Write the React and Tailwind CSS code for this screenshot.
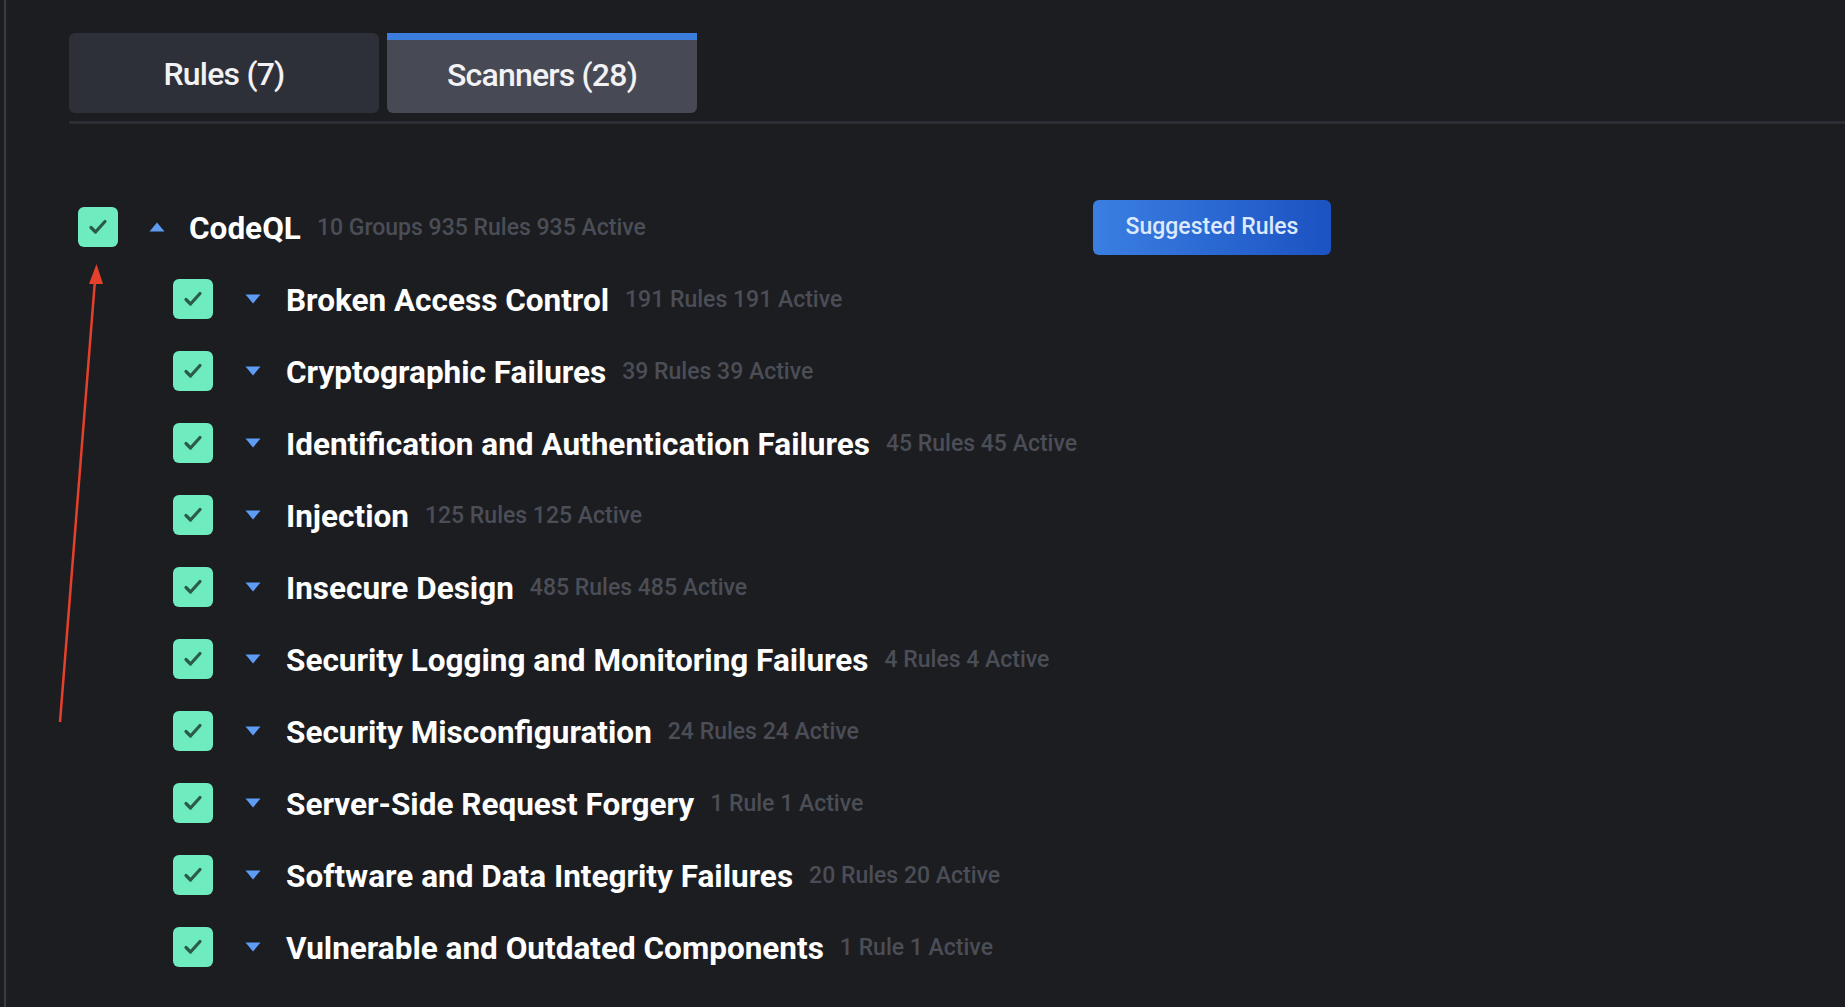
import { useState } from 'react';

const groups = [
  { name: 'Broken Access Control', meta: '191 Rules 191 Active' },
  { name: 'Cryptographic Failures', meta: '39 Rules 39 Active' },
  { name: 'Identification and Authentication Failures', meta: '45 Rules 45 Active' },
  { name: 'Injection', meta: '125 Rules 125 Active' },
  { name: 'Insecure Design', meta: '485 Rules 485 Active' },
  { name: 'Security Logging and Monitoring Failures', meta: '4 Rules 4 Active' },
  { name: 'Security Misconfiguration', meta: '24 Rules 24 Active' },
  { name: 'Server-Side Request Forgery', meta: '1 Rule 1 Active' },
  { name: 'Software and Data Integrity Failures', meta: '20 Rules 20 Active' },
  { name: 'Vulnerable and Outdated Components', meta: '1 Rule 1 Active' },
];

function Check() {
  return (
    <div className="w-[40px] h-[40px] rounded-[6px] bg-[#6eecbf] flex items-center justify-center shrink-0">
      <svg width="24" height="24" viewBox="0 0 24 24" fill="none">
        <path d="M5 12.5l4.5 4.5 9.5-10.5" stroke="#2b5a47" strokeWidth="3.2" strokeLinecap="round" strokeLinejoin="round" />
      </svg>
    </div>
  );
}

function Caret({ up }) {
  return (
    <svg width="16" height="10" viewBox="0 0 16 10" className="shrink-0">
      {up ? <path d="M8 0.5L15.5 9.5H0.5Z" fill="#5d9cf2" /> : <path d="M0.5 0.5H15.5L8 9.5Z" fill="#5d9cf2" />}
    </svg>
  );
}

export default function App() {
  const [tab, setTab] = useState('scanners');

  return (
    <div className="relative min-h-screen h-[1007px] bg-[#1c1d20] overflow-hidden" style={{ fontFamily: 'Roboto, "Noto Sans", sans-serif' }}>
      <div className="ml-[4px] h-full border-l-2 border-[#3a3b43] pl-[63px] pt-[33px]">
        <div className="flex gap-[8px]">
          <button
            onClick={() => setTab('rules')}
            className="w-[310px] h-[80px] rounded-[6px] bg-[#2e3039] text-[#f2f2f4] text-[32px] font-medium tracking-tight flex items-center justify-center pt-[2px]"
          >
            Rules (7)
          </button>
          <button
            onClick={() => setTab('scanners')}
            className="w-[310px] h-[80px] rounded-b-[6px] bg-[#474955] border-t-[7px] border-[#3b7ddd] text-[#f2f2f4] text-[32px] font-medium tracking-tight flex items-center justify-center pb-[4px]"
          >
            Scanners (28)
          </button>
        </div>
        <div className="mt-[8px] h-[3px] bg-[#2c2d34]" />

        <div className="pl-[9px] pt-[67px]">
          <div className="w-[1253px] h-[72px] flex items-center justify-between">
            <div className="flex items-center">
              <Check />
              <div className="ml-[31px] mr-[24px]"><Caret up /></div>
              <span className="text-white text-[31.5px] font-bold pt-[3px]">CodeQL</span>
              <span className="ml-[16px] text-[#4b4d57] text-[23px] font-medium pt-[3px]">10 Groups 935 Rules 935 Active</span>
            </div>
            <button className="w-[238px] h-[55px] rounded-[6px] bg-gradient-to-r from-[#3b7fe2] to-[#1c52c2] text-[#dce9ff] text-[23px] font-medium">
              Suggested Rules
            </button>
          </div>

          <div className="pl-[95px]">
            {groups.map(g => (
              <div key={g.name} className="h-[72px] flex items-center">
                <Check />
                <div className="ml-[32px] mr-[25px]"><Caret /></div>
                <span className="text-white text-[31.5px] font-bold whitespace-nowrap pt-[3px]">{g.name}</span>
                <span className="ml-[16px] text-[#4b4d57] text-[23px] font-medium whitespace-nowrap pt-[3px]">{g.meta}</span>
              </div>
            ))}
          </div>
        </div>
      </div>

      <svg className="absolute left-0 top-0 pointer-events-none" width="140" height="760" viewBox="0 0 140 760">
        <line x1="60" y1="722" x2="95" y2="280" stroke="#e5402b" strokeWidth="2.5" />
        <path d="M96.5 264L103 284H89Z" fill="#e5402b" />
      </svg>
    </div>
  );
}
